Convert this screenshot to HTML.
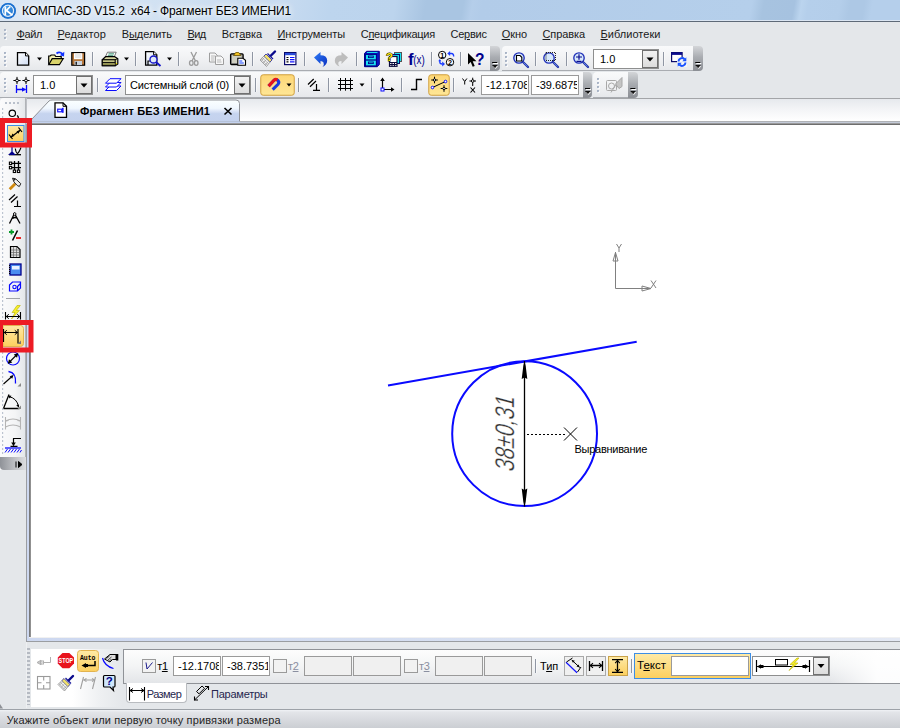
<!DOCTYPE html>
<html lang="ru"><head><meta charset="utf-8"><title>КОМПАС-3D V15.2 x64 - Фрагмент БЕЗ ИМЕНИ1</title>
<style>
html,body{margin:0;padding:0}
body{width:900px;height:728px;position:relative;overflow:hidden;background:#e4e7ea;font-family:'Liberation Sans', sans-serif;font-size:11px}
u{text-decoration:underline;text-underline-offset:1px}
svg{position:absolute;left:0;top:0;overflow:visible}
</style></head><body>
<div style="position:absolute;left:0px;top:0px;width:900px;height:20px;background:linear-gradient(100deg,#d9e6f4 0px,#dae7f5 29px,#d2e2f2 148px,#c6daf0 286px,#bdd5ee 326px,#bcd4ed 390px,#a9c5e2 420px,#a9c5e2 457px,#b5ceea 466px,#b2cce9 476px,#b5cfeb 741px,#a7c3e0 753px,#a6c2e0 783px,#bbd4ee 790px,#b5cfeb 797px,#b4ceea 828px,#adc8e5 838px,#adc8e5 852px,#b5cfeb 860px,#b5cfeb 890px)"></div>
<div style="position:absolute;left:0px;top:20px;width:900px;height:1px;background:#dbe6f3"></div>
<div style="position:absolute;left:0px;top:21px;width:900px;height:1px;background:#5e6a78"></div>
<div style="position:absolute;left:0px;top:46px;width:489.5px;height:25px;background:linear-gradient(#f9fafb,#f1f2f4 50%,#e6e8eb);border-radius:4px 0 0 0;border-bottom:1px solid #a9acb1;box-sizing:border-box"></div>
<div style="position:absolute;left:489.5px;top:46px;width:10.2px;height:25px;background:linear-gradient(#d3d5d8,#a9acb1 45%,#8b8e94);border-radius:0 4px 4px 0"></div>
<div style="position:absolute;left:502px;top:46px;width:190.5px;height:25px;background:linear-gradient(#f9fafb,#f1f2f4 50%,#e6e8eb);border-radius:4px 0 0 0;border-bottom:1px solid #a9acb1;box-sizing:border-box"></div>
<div style="position:absolute;left:692.5px;top:46px;width:10.5px;height:25px;background:linear-gradient(#d3d5d8,#a9acb1 45%,#8b8e94);border-radius:0 4px 4px 0"></div>
<div style="position:absolute;left:0px;top:72px;width:583px;height:26px;background:linear-gradient(#f9fafb,#f1f2f4 50%,#e6e8eb);border-radius:4px 0 0 0;border-bottom:1px solid #a9acb1;box-sizing:border-box"></div>
<div style="position:absolute;left:583px;top:72px;width:9px;height:26px;background:linear-gradient(#d3d5d8,#a9acb1 45%,#8b8e94);border-radius:0 4px 4px 0"></div>
<div style="position:absolute;left:593px;top:72px;width:35px;height:26px;background:linear-gradient(#f9fafb,#f1f2f4 50%,#e6e8eb);border-radius:4px 0 0 0;border-bottom:1px solid #a9acb1;box-sizing:border-box"></div>
<div style="position:absolute;left:628px;top:72px;width:9.6px;height:26px;background:linear-gradient(#d3d5d8,#a9acb1 45%,#8b8e94);border-radius:0 4px 4px 0"></div>
<div style="position:absolute;left:33px;top:75px;width:60px;height:20px;background:#fff;border:1px solid #8e8f8f;box-sizing:border-box"></div>
<div style="position:absolute;left:76px;top:76px;width:16px;height:18px;background:linear-gradient(#f2f2f2,#dcdcdc);border:1px solid #707070;box-sizing:border-box"></div>
<div style="position:absolute;left:125px;top:75px;width:126px;height:20px;background:#fff;border:1px solid #8e8f8f;box-sizing:border-box"></div>
<div style="position:absolute;left:234px;top:76px;width:16px;height:18px;background:linear-gradient(#f2f2f2,#dcdcdc);border:1px solid #707070;box-sizing:border-box"></div>
<div style="position:absolute;left:593px;top:49px;width:66px;height:20px;background:#fff;border:1px solid #8e8f8f;box-sizing:border-box"></div>
<div style="position:absolute;left:642px;top:50px;width:16px;height:18px;background:linear-gradient(#f2f2f2,#dcdcdc);border:1px solid #707070;box-sizing:border-box"></div>
<div style="position:absolute;left:481px;top:75px;width:48px;height:20px;background:#fff;border:1px solid #9a9a9a;box-sizing:border-box"></div>
<div style="position:absolute;left:531px;top:75px;width:48px;height:20px;background:#fff;border:1px solid #9a9a9a;box-sizing:border-box"></div>
<div style="position:absolute;left:0px;top:98px;width:25px;height:372px;background:linear-gradient(90deg,#fbfbfc,#f4f5f6 60%,#e4e7ea);border-radius:4px 0 0 0"></div>
<div style="position:absolute;left:25px;top:98px;width:2px;height:372px;background:linear-gradient(90deg,#a9acb0,#c4c7cc)"></div>
<div style="position:absolute;left:26px;top:470px;width:1px;height:238px;background:#eef0f2"></div>
<div style="position:absolute;left:0px;top:457px;width:26px;height:13px;background:linear-gradient(90deg,#8f9298,#b9bbbf 50%,#dcdde0);border-radius:0 0 0 4px"></div>
<div style="position:absolute;left:27px;top:98px;width:873px;height:1px;background:#a3a5a8"></div>
<div style="position:absolute;left:27px;top:99px;width:873px;height:22px;background:linear-gradient(#e6e9ed,#f4f5f7 50%,#ffffff)"></div>
<div style="position:absolute;left:27px;top:121px;width:873px;height:1px;background:#b0b2b6"></div>
<div style="position:absolute;left:27px;top:122px;width:873px;height:1px;background:#c3cad8"></div>
<div style="position:absolute;left:27px;top:123px;width:873px;height:1px;background:#9a9a9a"></div>
<div style="position:absolute;left:27px;top:124px;width:873px;height:1px;background:#6e6e6e"></div>
<div style="position:absolute;left:26px;top:124px;width:1px;height:518px;background:#9a9da1"></div>
<div style="position:absolute;left:27px;top:124px;width:2px;height:517px;background:#cdd8f0"></div>
<div style="position:absolute;left:29px;top:125px;width:2px;height:512px;background:linear-gradient(90deg,#6e6e6e,#9c9c9c)"></div>
<div style="position:absolute;left:31px;top:125px;width:869px;height:512px;background:#fff"></div>
<div style="position:absolute;left:29px;top:637px;width:871px;height:1px;background:#f1f1f1"></div>
<div style="position:absolute;left:27px;top:638px;width:873px;height:3px;background:linear-gradient(90deg,#cdd8f0 0,#d5def1 40%,#e4e9f4 100%)"></div>
<div style="position:absolute;left:26px;top:641px;width:874px;height:1px;background:#9a9da1"></div>
<div style="position:absolute;left:27px;top:646px;width:4px;height:59px;background:repeating-linear-gradient(#e4e7ea 0 2px,#b5bac2 2px 4px);width:3px"></div>
<div style="position:absolute;left:31px;top:649px;width:92px;height:58px;background:linear-gradient(90deg,#ffffff 0%,#ffffff 45%,#eef0f2 75%,#e4e7ea 100%)"></div>
<div style="position:absolute;left:123px;top:649px;width:777px;height:35px;background:linear-gradient(90deg,rgba(255,255,255,0) 0,rgba(255,255,255,0) 91%,rgba(255,255,255,.9) 97%),linear-gradient(#fdfdfd,#f3f4f5 50%,#e3e5e8);border:1px solid #8f9297;border-right:none;box-sizing:border-box"></div>
<div style="position:absolute;left:126px;top:683px;width:61px;height:20px;background:#fff;border:1px solid #b9bcc0;border-top:none;border-radius:0 0 4px 4px;box-sizing:border-box"></div>
<div style="position:absolute;left:127px;top:683px;width:59px;height:1px;background:#fff"></div>
<div style="position:absolute;left:142px;top:659px;width:14px;height:14px;background:#f2f2f2;border:1px solid #9a9a9a;box-sizing:border-box"></div>
<div style="position:absolute;left:273px;top:659px;width:14px;height:14px;background:#f2f2f2;border:1px solid #9a9a9a;box-sizing:border-box"></div>
<div style="position:absolute;left:404px;top:659px;width:14px;height:14px;background:#f2f2f2;border:1px solid #9a9a9a;box-sizing:border-box"></div>
<div style="position:absolute;left:173px;top:656px;width:48px;height:20px;background:#fff;border:1px solid #9a9a9a;box-sizing:border-box"></div>
<div style="position:absolute;left:222px;top:656px;width:48px;height:20px;background:#fff;border:1px solid #9a9a9a;box-sizing:border-box"></div>
<div style="position:absolute;left:304px;top:656px;width:48px;height:20px;background:#f0f0f0;border:1px solid #9a9a9a;box-sizing:border-box"></div>
<div style="position:absolute;left:353px;top:656px;width:48px;height:20px;background:#f0f0f0;border:1px solid #9a9a9a;box-sizing:border-box"></div>
<div style="position:absolute;left:435px;top:656px;width:48px;height:20px;background:#f0f0f0;border:1px solid #9a9a9a;box-sizing:border-box"></div>
<div style="position:absolute;left:484px;top:656px;width:48px;height:20px;background:#f0f0f0;border:1px solid #9a9a9a;box-sizing:border-box"></div>
<div style="position:absolute;left:564px;top:656px;width:20px;height:20px;background:#f0f0f0;border:1px solid #a9a9a9;box-sizing:border-box"></div>
<div style="position:absolute;left:586px;top:656px;width:20px;height:20px;background:#f0f0f0;border:1px solid #a9a9a9;box-sizing:border-box"></div>
<div style="position:absolute;left:634px;top:653px;width:117px;height:26px;background:linear-gradient(#feeaa6,#fccf5e);border:1px solid #3c8ee6;box-sizing:border-box"></div>
<div style="position:absolute;left:671px;top:656px;width:78px;height:20px;background:#fff;border:1px solid #9a9a9a;box-sizing:border-box"></div>
<div style="position:absolute;left:752px;top:656px;width:78px;height:20px;background:#fff;border:1px solid #8e8f8f;box-sizing:border-box"></div>
<div style="position:absolute;left:813px;top:657px;width:16px;height:18px;background:linear-gradient(#f2f2f2,#dcdcdc);border:1px solid #707070;box-sizing:border-box"></div>
<div style="position:absolute;left:0px;top:709px;width:900px;height:1px;background:#9da2a8"></div>
<div style="position:absolute;left:0px;top:710px;width:900px;height:18px;background:linear-gradient(#f0f2f5 0,#e3e5e9 12%,#cbced3 100%)"></div>
<svg width="900" height="728" viewBox="0 0 900 728">
<defs>
<linearGradient id="gy" x1="0" y1="0" x2="0" y2="1"><stop offset="0" stop-color="#feeaa6"/><stop offset="1" stop-color="#fccf5e"/></linearGradient>
<linearGradient id="gyt" x1="0" y1="0" x2="0" y2="1"><stop offset="0" stop-color="#fdd674"/><stop offset=".5" stop-color="#fedf88"/><stop offset="1" stop-color="#fee695"/></linearGradient>
<linearGradient id="gh" x1="0" y1="0" x2="0" y2="1"><stop offset="0" stop-color="#d5d7da"/><stop offset="0.5" stop-color="#a2a5aa"/><stop offset="1" stop-color="#8d9096"/></linearGradient>
</defs>
<rect x="4" y="29" width="2" height="2" fill="#a9b4c6"/><rect x="5" y="30" width="2" height="2" fill="#fff" opacity=".7"/><rect x="4" y="29" width="2" height="2" fill="#a9b4c6" opacity=".8"/>
<rect x="4" y="33" width="2" height="2" fill="#a9b4c6"/><rect x="5" y="34" width="2" height="2" fill="#fff" opacity=".7"/><rect x="4" y="33" width="2" height="2" fill="#a9b4c6" opacity=".8"/>
<rect x="4" y="37" width="2" height="2" fill="#a9b4c6"/><rect x="5" y="38" width="2" height="2" fill="#fff" opacity=".7"/><rect x="4" y="37" width="2" height="2" fill="#a9b4c6" opacity=".8"/>
<rect x="492.1" y="62" width="5" height="1" fill="#000"/><rect x="493.1" y="63" width="5" height="1" fill="#fff"/><path d="M492.1 65h5l-2.5 3z" fill="#000"/><path d="M493.1 66h5l-2.5 3z" fill="#fff" opacity=".9"/><path d="M492.6 65h5l-2.5 3z" fill="#111"/>
<rect x="695.25" y="62" width="5" height="1" fill="#000"/><rect x="696.25" y="63" width="5" height="1" fill="#fff"/><path d="M695.25 65h5l-2.5 3z" fill="#000"/><path d="M696.25 66h5l-2.5 3z" fill="#fff" opacity=".9"/><path d="M695.75 65h5l-2.5 3z" fill="#111"/>
<rect x="585.0" y="88" width="5" height="1" fill="#000"/><rect x="586.0" y="89" width="5" height="1" fill="#fff"/><path d="M585.0 91h5l-2.5 3z" fill="#000"/><path d="M586.0 92h5l-2.5 3z" fill="#fff" opacity=".9"/><path d="M585.5 91h5l-2.5 3z" fill="#111"/>
<rect x="630.3" y="88" width="5" height="1" fill="#000"/><rect x="631.3" y="89" width="5" height="1" fill="#fff"/><path d="M630.3 91h5l-2.5 3z" fill="#000"/><path d="M631.3 92h5l-2.5 3z" fill="#fff" opacity=".9"/><path d="M630.8 91h5l-2.5 3z" fill="#111"/>
<rect x="4" y="52" width="2" height="2" fill="#a9b4c6"/><rect x="5" y="53" width="2" height="2" fill="#fff" opacity=".7"/><rect x="4" y="52" width="2" height="2" fill="#a9b4c6" opacity=".8"/>
<rect x="4" y="56" width="2" height="2" fill="#a9b4c6"/><rect x="5" y="57" width="2" height="2" fill="#fff" opacity=".7"/><rect x="4" y="56" width="2" height="2" fill="#a9b4c6" opacity=".8"/>
<rect x="4" y="60" width="2" height="2" fill="#a9b4c6"/><rect x="5" y="61" width="2" height="2" fill="#fff" opacity=".7"/><rect x="4" y="60" width="2" height="2" fill="#a9b4c6" opacity=".8"/>
<rect x="4" y="64" width="2" height="2" fill="#a9b4c6"/><rect x="5" y="65" width="2" height="2" fill="#fff" opacity=".7"/><rect x="4" y="64" width="2" height="2" fill="#a9b4c6" opacity=".8"/>
<rect x="505" y="52" width="2" height="2" fill="#a9b4c6"/><rect x="506" y="53" width="2" height="2" fill="#fff" opacity=".7"/><rect x="505" y="52" width="2" height="2" fill="#a9b4c6" opacity=".8"/>
<rect x="505" y="56" width="2" height="2" fill="#a9b4c6"/><rect x="506" y="57" width="2" height="2" fill="#fff" opacity=".7"/><rect x="505" y="56" width="2" height="2" fill="#a9b4c6" opacity=".8"/>
<rect x="505" y="60" width="2" height="2" fill="#a9b4c6"/><rect x="506" y="61" width="2" height="2" fill="#fff" opacity=".7"/><rect x="505" y="60" width="2" height="2" fill="#a9b4c6" opacity=".8"/>
<rect x="505" y="64" width="2" height="2" fill="#a9b4c6"/><rect x="506" y="65" width="2" height="2" fill="#fff" opacity=".7"/><rect x="505" y="64" width="2" height="2" fill="#a9b4c6" opacity=".8"/>
<rect x="4" y="78" width="2" height="2" fill="#a9b4c6"/><rect x="5" y="79" width="2" height="2" fill="#fff" opacity=".7"/><rect x="4" y="78" width="2" height="2" fill="#a9b4c6" opacity=".8"/>
<rect x="4" y="82" width="2" height="2" fill="#a9b4c6"/><rect x="5" y="83" width="2" height="2" fill="#fff" opacity=".7"/><rect x="4" y="82" width="2" height="2" fill="#a9b4c6" opacity=".8"/>
<rect x="4" y="86" width="2" height="2" fill="#a9b4c6"/><rect x="5" y="87" width="2" height="2" fill="#fff" opacity=".7"/><rect x="4" y="86" width="2" height="2" fill="#a9b4c6" opacity=".8"/>
<rect x="4" y="90" width="2" height="2" fill="#a9b4c6"/><rect x="5" y="91" width="2" height="2" fill="#fff" opacity=".7"/><rect x="4" y="90" width="2" height="2" fill="#a9b4c6" opacity=".8"/>
<rect x="597" y="78" width="2" height="2" fill="#a9b4c6"/><rect x="598" y="79" width="2" height="2" fill="#fff" opacity=".7"/><rect x="597" y="78" width="2" height="2" fill="#a9b4c6" opacity=".8"/>
<rect x="597" y="82" width="2" height="2" fill="#a9b4c6"/><rect x="598" y="83" width="2" height="2" fill="#fff" opacity=".7"/><rect x="597" y="82" width="2" height="2" fill="#a9b4c6" opacity=".8"/>
<rect x="597" y="86" width="2" height="2" fill="#a9b4c6"/><rect x="598" y="87" width="2" height="2" fill="#fff" opacity=".7"/><rect x="597" y="86" width="2" height="2" fill="#a9b4c6" opacity=".8"/>
<rect x="597" y="90" width="2" height="2" fill="#a9b4c6"/><rect x="598" y="91" width="2" height="2" fill="#fff" opacity=".7"/><rect x="597" y="90" width="2" height="2" fill="#a9b4c6" opacity=".8"/>
<rect x="92" y="52" width="1" height="14" fill="#8f96a3"/><rect x="93" y="52" width="1" height="14" fill="#fff" opacity=".5"/>
<rect x="135" y="52" width="1" height="14" fill="#8f96a3"/><rect x="136" y="52" width="1" height="14" fill="#fff" opacity=".5"/>
<rect x="178" y="52" width="1" height="14" fill="#8f96a3"/><rect x="179" y="52" width="1" height="14" fill="#fff" opacity=".5"/>
<rect x="252" y="52" width="1" height="14" fill="#8f96a3"/><rect x="253" y="52" width="1" height="14" fill="#fff" opacity=".5"/>
<rect x="304" y="52" width="1" height="14" fill="#8f96a3"/><rect x="305" y="52" width="1" height="14" fill="#fff" opacity=".5"/>
<rect x="356" y="52" width="1" height="14" fill="#8f96a3"/><rect x="357" y="52" width="1" height="14" fill="#fff" opacity=".5"/>
<rect x="431" y="52" width="1" height="14" fill="#8f96a3"/><rect x="432" y="52" width="1" height="14" fill="#fff" opacity=".5"/>
<rect x="460" y="52" width="1" height="14" fill="#8f96a3"/><rect x="461" y="52" width="1" height="14" fill="#fff" opacity=".5"/>
<rect x="535" y="52" width="1" height="14" fill="#8f96a3"/><rect x="536" y="52" width="1" height="14" fill="#fff" opacity=".5"/>
<rect x="566" y="52" width="1" height="14" fill="#8f96a3"/><rect x="567" y="52" width="1" height="14" fill="#fff" opacity=".5"/>
<rect x="663" y="52" width="1" height="14" fill="#8f96a3"/><rect x="664" y="52" width="1" height="14" fill="#fff" opacity=".5"/>
<rect x="97" y="78" width="1" height="14" fill="#8f96a3"/><rect x="98" y="78" width="1" height="14" fill="#fff" opacity=".5"/>
<rect x="255" y="78" width="1" height="14" fill="#8f96a3"/><rect x="256" y="78" width="1" height="14" fill="#fff" opacity=".5"/>
<rect x="298" y="78" width="1" height="14" fill="#8f96a3"/><rect x="299" y="78" width="1" height="14" fill="#fff" opacity=".5"/>
<rect x="328" y="78" width="1" height="14" fill="#8f96a3"/><rect x="329" y="78" width="1" height="14" fill="#fff" opacity=".5"/>
<rect x="371" y="78" width="1" height="14" fill="#8f96a3"/><rect x="372" y="78" width="1" height="14" fill="#fff" opacity=".5"/>
<rect x="401" y="78" width="1" height="14" fill="#8f96a3"/><rect x="402" y="78" width="1" height="14" fill="#fff" opacity=".5"/>
<rect x="453" y="78" width="1" height="14" fill="#8f96a3"/><rect x="454" y="78" width="1" height="14" fill="#fff" opacity=".5"/>
<path d="M80.5 83.5h7l-3.5 4z" fill="#000"/>
<path d="M238.5 83.5h7l-3.5 4z" fill="#000"/>
<path d="M646.5 57.5h7l-3.5 4z" fill="#000"/>
<rect x="260.75" y="74.75" width="33.5" height="20.5" rx="2.5" fill="url(#gyt)" stroke="#d0a040"/>
<rect x="428.75" y="74.75" width="20.5" height="20.5" rx="2.5" fill="url(#gyt)" stroke="#d0a040"/>
<path d="M37 57.5h5l-2.5 3.0z" fill="#000"/>
<path d="M124 57.5h5l-2.5 3.0z" fill="#000"/>
<path d="M167 57.5h5l-2.5 3.0z" fill="#000"/>
<path d="M286.5 83.5h5l-2.5 3.0z" fill="#000"/>
<path d="M359.5 83.5h5l-2.5 3.0z" fill="#000"/>
<path d="M16 461.5v6M18.5 461.5l3.5 3l-3.5 3z" stroke="#000" fill="#000" stroke-width="1"/>
<rect x="5" y="102" width="2" height="2" fill="#b9c0cb"/>
<rect x="9" y="102" width="2" height="2" fill="#b9c0cb"/>
<rect x="13" y="102" width="2" height="2" fill="#b9c0cb"/>
<rect x="17" y="102" width="2" height="2" fill="#b9c0cb"/>
<rect x="2" y="108" width="1.200" height="2" fill="#bcc4d0"/>
<rect x="2" y="112" width="1.200" height="2" fill="#bcc4d0"/>
<rect x="2" y="116" width="1.200" height="2" fill="#bcc4d0"/>
<rect x="2" y="120" width="1.200" height="2" fill="#bcc4d0"/>
<rect x="2" y="124" width="1.200" height="2" fill="#bcc4d0"/>
<rect x="2" y="128" width="1.200" height="2" fill="#bcc4d0"/>
<rect x="2" y="132" width="1.200" height="2" fill="#bcc4d0"/>
<rect x="2" y="136" width="1.200" height="2" fill="#bcc4d0"/>
<rect x="2" y="140" width="1.200" height="2" fill="#bcc4d0"/>
<rect x="2" y="144" width="1.200" height="2" fill="#bcc4d0"/>
<rect x="2" y="148" width="1.200" height="2" fill="#bcc4d0"/>
<rect x="2" y="152" width="1.200" height="2" fill="#bcc4d0"/>
<rect x="2" y="156" width="1.200" height="2" fill="#bcc4d0"/>
<rect x="2" y="160" width="1.200" height="2" fill="#bcc4d0"/>
<rect x="2" y="164" width="1.200" height="2" fill="#bcc4d0"/>
<rect x="2" y="168" width="1.200" height="2" fill="#bcc4d0"/>
<rect x="2" y="172" width="1.200" height="2" fill="#bcc4d0"/>
<rect x="2" y="176" width="1.200" height="2" fill="#bcc4d0"/>
<rect x="2" y="180" width="1.200" height="2" fill="#bcc4d0"/>
<rect x="2" y="184" width="1.200" height="2" fill="#bcc4d0"/>
<rect x="2" y="188" width="1.200" height="2" fill="#bcc4d0"/>
<rect x="2" y="192" width="1.200" height="2" fill="#bcc4d0"/>
<rect x="2" y="196" width="1.200" height="2" fill="#bcc4d0"/>
<rect x="2" y="200" width="1.200" height="2" fill="#bcc4d0"/>
<rect x="2" y="204" width="1.200" height="2" fill="#bcc4d0"/>
<rect x="2" y="208" width="1.200" height="2" fill="#bcc4d0"/>
<rect x="2" y="212" width="1.200" height="2" fill="#bcc4d0"/>
<rect x="2" y="216" width="1.200" height="2" fill="#bcc4d0"/>
<rect x="2" y="220" width="1.200" height="2" fill="#bcc4d0"/>
<rect x="2" y="224" width="1.200" height="2" fill="#bcc4d0"/>
<rect x="2" y="228" width="1.200" height="2" fill="#bcc4d0"/>
<rect x="2" y="232" width="1.200" height="2" fill="#bcc4d0"/>
<rect x="2" y="236" width="1.200" height="2" fill="#bcc4d0"/>
<rect x="2" y="240" width="1.200" height="2" fill="#bcc4d0"/>
<rect x="2" y="244" width="1.200" height="2" fill="#bcc4d0"/>
<rect x="2" y="248" width="1.200" height="2" fill="#bcc4d0"/>
<rect x="2" y="252" width="1.200" height="2" fill="#bcc4d0"/>
<rect x="2" y="256" width="1.200" height="2" fill="#bcc4d0"/>
<rect x="2" y="260" width="1.200" height="2" fill="#bcc4d0"/>
<rect x="2" y="264" width="1.200" height="2" fill="#bcc4d0"/>
<rect x="2" y="268" width="1.200" height="2" fill="#bcc4d0"/>
<rect x="2" y="272" width="1.200" height="2" fill="#bcc4d0"/>
<rect x="2" y="276" width="1.200" height="2" fill="#bcc4d0"/>
<rect x="2" y="280" width="1.200" height="2" fill="#bcc4d0"/>
<rect x="2" y="284" width="1.200" height="2" fill="#bcc4d0"/>
<rect x="2" y="288" width="1.200" height="2" fill="#bcc4d0"/>
<rect x="2" y="292" width="1.200" height="2" fill="#bcc4d0"/>
<rect x="2" y="296" width="1.200" height="2" fill="#bcc4d0"/>
<rect x="2" y="300" width="1.200" height="2" fill="#bcc4d0"/>
<rect x="2" y="304" width="1.200" height="2" fill="#bcc4d0"/>
<rect x="2" y="308" width="1.200" height="2" fill="#bcc4d0"/>
<rect x="2" y="312" width="1.200" height="2" fill="#bcc4d0"/>
<rect x="2" y="316" width="1.200" height="2" fill="#bcc4d0"/>
<rect x="2" y="320" width="1.200" height="2" fill="#bcc4d0"/>
<rect x="2" y="324" width="1.200" height="2" fill="#bcc4d0"/>
<rect x="2" y="328" width="1.200" height="2" fill="#bcc4d0"/>
<rect x="2" y="332" width="1.200" height="2" fill="#bcc4d0"/>
<rect x="2" y="336" width="1.200" height="2" fill="#bcc4d0"/>
<rect x="2" y="340" width="1.200" height="2" fill="#bcc4d0"/>
<rect x="2" y="344" width="1.200" height="2" fill="#bcc4d0"/>
<rect x="2" y="348" width="1.200" height="2" fill="#bcc4d0"/>
<rect x="2" y="352" width="1.200" height="2" fill="#bcc4d0"/>
<rect x="2" y="356" width="1.200" height="2" fill="#bcc4d0"/>
<rect x="2" y="360" width="1.200" height="2" fill="#bcc4d0"/>
<rect x="2" y="364" width="1.200" height="2" fill="#bcc4d0"/>
<rect x="2" y="368" width="1.200" height="2" fill="#bcc4d0"/>
<rect x="2" y="372" width="1.200" height="2" fill="#bcc4d0"/>
<rect x="2" y="376" width="1.200" height="2" fill="#bcc4d0"/>
<rect x="2" y="380" width="1.200" height="2" fill="#bcc4d0"/>
<rect x="2" y="384" width="1.200" height="2" fill="#bcc4d0"/>
<rect x="2" y="388" width="1.200" height="2" fill="#bcc4d0"/>
<rect x="2" y="392" width="1.200" height="2" fill="#bcc4d0"/>
<rect x="2" y="396" width="1.200" height="2" fill="#bcc4d0"/>
<rect x="2" y="400" width="1.200" height="2" fill="#bcc4d0"/>
<rect x="2" y="404" width="1.200" height="2" fill="#bcc4d0"/>
<rect x="2" y="408" width="1.200" height="2" fill="#bcc4d0"/>
<rect x="2" y="412" width="1.200" height="2" fill="#bcc4d0"/>
<rect x="2" y="416" width="1.200" height="2" fill="#bcc4d0"/>
<rect x="2" y="420" width="1.200" height="2" fill="#bcc4d0"/>
<rect x="2" y="424" width="1.200" height="2" fill="#bcc4d0"/>
<rect x="2" y="428" width="1.200" height="2" fill="#bcc4d0"/>
<rect x="2" y="432" width="1.200" height="2" fill="#bcc4d0"/>
<rect x="2" y="436" width="1.200" height="2" fill="#bcc4d0"/>
<rect x="2" y="440" width="1.200" height="2" fill="#bcc4d0"/>
<rect x="2" y="444" width="1.200" height="2" fill="#bcc4d0"/>
<rect x="2" y="448" width="1.200" height="2" fill="#bcc4d0"/>
<rect x="2" y="452" width="1.200" height="2" fill="#bcc4d0"/>
<rect x="6" y="298" width="14" height="1" fill="#a0a3a8"/>
<defs><linearGradient id="gt" x1="0" y1="0" x2="0" y2="1"><stop offset="0" stop-color="#fbffff"/><stop offset=".38" stop-color="#f0f7fe"/><stop offset=".52" stop-color="#d8e2f6"/><stop offset=".62" stop-color="#c6d4ef"/><stop offset="1" stop-color="#c4d2ee"/></linearGradient></defs>
<path d="M30 122 L32 119 L49 101 Q50 100 52 100 L236 100 Q239.5 100 239.5 103.5 L239.5 122 Z" fill="url(#gt)" stroke="#8f9297" stroke-width="1"/>
<rect x="30" y="121.5" width="210" height="1.5" fill="#c3d1ee"/>
<path d="M224.5 108l7 6.5M231.5 108l-7 6.5" stroke="#000" stroke-width="1.6" fill="none"/>
<path d="M55 102.800h8l3.500 3.500v11h-11.500z" fill="#fff" stroke="#000" stroke-width="1.300"/><path d="M63 102.800v3.500h3.500" fill="none" stroke="#000"/><rect x="57.700" y="109.200" width="4" height="2.600" fill="#fff" stroke="#1a1aff" stroke-width="1.200"/><path d="M62.800 107.800v5" stroke="#1a1aff" stroke-width="1.700"/>
<g fill="none">
<path d="M388 385.400L636.700 341.800" stroke="#0a0aff" stroke-width="2"/>
<circle cx="524.600" cy="433.700" r="72.400" stroke="#0a0aff" stroke-width="2"/>
<path d="M524.500 361v145.500" stroke="#000" stroke-width="1.300"/>
<path d="M524.500 361l-1.200 5l-1.600 13l2.800 -1.500l2.800 1.500l-1.600 -13z" fill="#000"/>
<path d="M524.500 506.400l-1.200 -5l-1.600 -13l2.800 1.500l2.800 -1.500l-1.600 13z" fill="#000"/>
<path d="M527 434.500h38" stroke="#000" stroke-width="1" stroke-dasharray="2 2"/>
<path d="M564 427.500l13 13M577 427.500l-13 13" stroke="#000" stroke-width="1"/>
<g stroke="#808080" stroke-width="1">
<path d="M615.500 252v36.500h35.500"/><path d="M615.500 252.500l-2.500 8.500h5z"/><path d="M651 288.500l-9 -2.500v5z"/>
<path d="M616.500 244l2.500 4l2.500 -4M619 248v4"/><path d="M651 280.500l5 7.500M656 280.500l-5 7.500"/>
</g></g>
<text transform="translate(513.500 472.500) rotate(-90) skewX(-15)" font-family="Liberation Sans, sans-serif" font-size="27" fill="#333" stroke="#fff" stroke-width="0.350" textLength="75" lengthAdjust="spacingAndGlyphs">38±0,31</text>
<path d="M146 662.5l1 6.500l5.500 -6.500" stroke="#1a1a8c" stroke-width="1" fill="none"/>
<rect x="535" y="659" width="1" height="14" fill="#8f96a3"/><rect x="536" y="659" width="1" height="14" fill="#fff" opacity=".5"/>
<rect x="608.5" y="656.500" width="19" height="19" fill="url(#gy)" stroke="#c9a24a"/>
<rect x="631" y="659" width="1" height="14" fill="#8f96a3"/><rect x="632" y="659" width="1" height="14" fill="#fff" opacity=".5"/>
<path d="M817.500 664h7l-3.500 4z" fill="#000"/>
<path d="M0 704l3 4.500h-3z" fill="#8e9196"/>
<defs><linearGradient id="gpg" x1="0" y1="0" x2="1" y2="1"><stop offset="0" stop-color="#fff"/><stop offset="1" stop-color="#cfdcf3"/></linearGradient></defs>
<path d="M17.500 52.700h8l3.200 3.200v9.200h-11.200z" fill="url(#gpg)" stroke="#000" stroke-width="1.300"/><path d="M25.500 52.700v3.200h3.200" fill="#fff" stroke="#000" stroke-width="1"/>
<path d="M48.700 64.500v-8.500h1.500l1 -1h3.500l1 1.500h5.500v2" fill="#f4f0b0" stroke="#000" stroke-width="1.200"/><path d="M48.700 64.700l3.500 -6h11l-3.800 6z" fill="#d9d36a" stroke="#000" stroke-width="1.200"/><path d="M56.500 53.500q3 -2.500 6 0.500" fill="none" stroke="#1030ff" stroke-width="1.800"/><path d="M64.300 51.800l-0.300 4.700l-4.200 -1.200z" fill="#1030ff"/>
<rect x="71.800" y="52.600" width="12.800" height="12.600" fill="#b5763a" stroke="#000" stroke-width="1.200"/><rect x="74" y="53.200" width="8.300" height="6" fill="#fff"/><path d="M75 55h6.300M75 57h6.300" stroke="#c8c8c8" stroke-width=".8"/><rect x="74.500" y="61" width="7.500" height="4" fill="#c9d2dd"/><rect x="75.500" y="61.800" width="1.500" height="3" fill="#222"/>
<path d="M105.300 57l2.200 -4.800h8.700l-2 4.800z" fill="#fff" stroke="#666" stroke-width=".9"/><path d="M108.500 53.800h5.500M107.800 55.300h5.500" stroke="#2a8a6a" stroke-width=".9"/><path d="M102.300 59.700l3.200 -3h9.300l3 2v5.300l-2.600 1.700h-12.900z" fill="#d6d6a0" stroke="#000" stroke-width="1.200" stroke-linejoin="round"/><rect x="102.300" y="59.700" width="12.900" height="6" fill="#c2c284" stroke="#000" stroke-width="1.100"/><path d="M102.300 62.600h12.900" stroke="#000" stroke-width="1"/><rect x="103" y="63.300" width="11.500" height="1.700" fill="#8c8c4c"/><path d="M115.200 59.700l2.600 -1.200" stroke="#000" stroke-width="1"/><rect x="115.900" y="63" width="1.200" height="1.200" fill="#e8d800"/>
<path d="M145.600 51.600h8l3.200 3.200v10.400h-11.200z" fill="url(#gpg)" stroke="#000" stroke-width="1.300"/><path d="M153.600 51.600v3.200h3.200" fill="#fff" stroke="#000"/><path d="M148 65v-4h3" fill="none" stroke="#000" stroke-width="1.200"/><circle cx="153.500" cy="59.500" r="3.500" fill="#dfe9f7" stroke="#1414c8" stroke-width="1.300"/><path d="M156.200 62.200l4.300 3.800" stroke="#1414c8" stroke-width="1.900"/>
<g fill="none" stroke="#9b9b9b" stroke-width="1.300"><path d="M191 52l4.500 9M196.500 52l-4.500 9"/><ellipse cx="191.300" cy="63" rx="1.800" ry="2.300"/><ellipse cx="196.200" cy="63" rx="1.800" ry="2.300"/></g>
<g fill="#f7f7f7" stroke="#9e9e9e" stroke-width="1"><path d="M209.500 53h5.500l2.500 2.500v6.500h-8z"/><path d="M215.500 56h5.500l2.500 2.500v6h-8z"/></g><path d="M211 56h4M211 58h3.500M211 60h3.500M217 60h4M217 62h4.500" stroke="#b0b0b0" stroke-width=".9"/>
<rect x="230.600" y="53.800" width="12.500" height="10.700" rx="1" fill="#a5a5a5" stroke="#000" stroke-width="1.300"/><rect x="232" y="55.500" width="9.500" height="7.500" fill="#cfcfc0"/><path d="M233.500 55.500l2.200 -3h3l2.200 3z" fill="#f0c020" stroke="#6b5200" stroke-width=".8"/><path d="M237.800 58.300h5.200l2.500 2v5h-7.700z" fill="#fff" stroke="#000" stroke-width="1.100"/><path d="M239.300 61h3M239.300 63h4.500" stroke="#1040ff" stroke-width="1.200"/>
<g transform="translate(260 50.5)"><path d="M10.500 5.500l4.500 -4.500" stroke="#0a0a8c" stroke-width="2.400" stroke-linecap="round"/><path d="M6 3.500l6 6l-2.200 2.200l-6 -6z" fill="#f2e26a" stroke="#3b3b9c" stroke-width=".9"/><path d="M7.500 3l5.500 5.500" stroke="#1a1a9c" stroke-width="1.300"/><path d="M3.800 5.700l6 6l-3.300 4.300l-6.500 -6.500z" fill="#f4f4f4" stroke="#8e8e8e" stroke-width=".8"/><path d="M2.300 7.200l6 6M1 8.700l6 6M4.500 7l-3 3M6.500 9l-3.200 3.200M8.500 11l-3.200 3.300" stroke="#9a9a9a" stroke-width=".7"/></g>
<rect x="284.600" y="52.600" width="11.300" height="12" fill="#fff" stroke="#0a0a6c" stroke-width="1.200"/><rect x="285" y="53" width="10.500" height="2.200" fill="#2a4cd8"/><path d="M286.500 57.500h2M286.500 59.700h2M286.500 61.900h2" stroke="#000" stroke-width="1.200"/><path d="M290 57.500h4.500M290 59.700h4.500M290 61.900h4.500" stroke="#1414ff" stroke-width="1.200"/>
<defs><linearGradient id="gu" x1="0" y1="0" x2="1" y2="1"><stop offset="0" stop-color="#2f7df6"/><stop offset="1" stop-color="#0a2fc0"/></linearGradient></defs>
<path d="M314 57.500l6.500 -5.500v3.300q6.500 0 6.700 5.200q0 4 -4.700 6.500q2 -2.700 1 -4.500q-0.800 -1.500 -3 -1.500v3z" fill="url(#gu)"/>
<path d="M348 57.500l-6.500 -5.500v3.300q-6.500 0 -6.700 5.200q0 4 4.700 6q-2 -2.500 -1 -4.200q0.800 -1.300 3 -1.300v3z" fill="#bdbdbd"/>
<path d="M364.500 53.500l2 -2.200h12.800v13.200l-2 2.200h-12.800z" fill="#0a14c8" stroke="#00008b" stroke-width="1"/><rect x="365.300" y="54.300" width="11.200" height="11.700" fill="#19e0f0" stroke="#00008b" stroke-width="1.300"/><path d="M365.300 60h11.200" stroke="#00008b" stroke-width="1.300"/><path d="M367 52.500h10.500" stroke="#19e0f0" stroke-width="1"/><rect x="368.500" y="56" width="4.800" height="1.600" fill="none" stroke="#00008b" stroke-width=".9"/><rect x="368.500" y="62" width="4.800" height="1.600" fill="none" stroke="#00008b" stroke-width=".9"/>
<rect x="394.500" y="52.500" width="7" height="9" fill="#19e0f0" stroke="#555" stroke-width="1"/><rect x="392.500" y="54.500" width="7" height="9" fill="#19e0f0" stroke="#0a0a6c" stroke-width="1"/><rect x="389.500" y="56.500" width="7.500" height="9.800" fill="#fff" stroke="#0a0a3c" stroke-width="1.200"/><path d="M389.500 62.500h7.500M389.500 64.500h7.500M392 62.500v3.800M394.500 62.500v3.800" stroke="#0a0a3c" stroke-width="1"/>
<text x="386" y="60.500" font-family="Liberation Sans, sans-serif" font-weight="bold" font-size="11.500" fill="#f8e800" stroke="#000" stroke-width=".9" paint-order="stroke">?</text>
<text x="408" y="65" font-family="Liberation Sans, sans-serif" font-weight="bold" font-size="17" fill="#00008b">f</text><text x="413.300" y="64.300" font-family="Liberation Sans, sans-serif" font-size="12.500" fill="#00008b" textLength="11.500" lengthAdjust="spacingAndGlyphs">(x)</text>
<circle cx="442.200" cy="55" r="3.700" fill="#fff" stroke="#000" stroke-width="1"/><circle cx="450" cy="62.200" r="3.700" fill="#fff" stroke="#000" stroke-width="1"/><text x="440.300" y="57.600" font-family="Liberation Sans, sans-serif" font-weight="bold" font-size="7.200" fill="#000">1</text><text x="448" y="64.800" font-family="Liberation Sans, sans-serif" font-weight="bold" font-size="7.200" fill="#000">2</text><path d="M449 53.500h2.500q2.200 0 2.200 3" fill="none" stroke="#1a3cff" stroke-width="1.300"/><path d="M447.300 53.500l2.800 -2.600v5.200z" fill="#1a3cff"/><path d="M439.800 60.500v1.500q0 2 2.500 2" fill="none" stroke="#1a3cff" stroke-width="1.300"/><path d="M445 64l-2.800 -2.600v5.200z" fill="#1a3cff"/><path d="M438.300 61.300l1.500 -2.200l1.500 2.200z" fill="#1a3cff"/>
<path d="M468 53v11.500l2.700 -2.500l2 4.800l2 -0.900l-2 -4.600h3.800z" fill="#000"/><text x="475" y="65" font-family="Liberation Sans, sans-serif" font-weight="bold" font-size="17" fill="#00008b" textLength="9.500" lengthAdjust="spacingAndGlyphs">?</text>
<circle cx="519" cy="58" r="5.200" fill="#d6e8fb" stroke="#2030b8" stroke-width="1.350"/><path d="M523 62l5 5" stroke="#2434a8" stroke-width="2.300" stroke-linecap="round"/><path d="M523.5 62.5l4 4" stroke="#5a7ae0" stroke-width="1"/>
<path d="M516.500 55.500h3.500l1.800 1.800v3.700h-5.300z" fill="#fff" stroke="#000" stroke-width="1.100"/>
<circle cx="549" cy="58" r="5.200" fill="#d6e8fb" stroke="#2030b8" stroke-width="1.350"/><path d="M553 62l5 5" stroke="#2434a8" stroke-width="2.300" stroke-linecap="round"/><path d="M553.5 62.5l4 4" stroke="#5a7ae0" stroke-width="1"/>
<rect x="546" y="52.500" width="9.500" height="8" fill="none" stroke="#222" stroke-width="1" stroke-dasharray="1 1"/>
<circle cx="579" cy="58" r="5.200" fill="#d6e8fb" stroke="#2030b8" stroke-width="1.350"/><path d="M583 62l5 5" stroke="#2434a8" stroke-width="2.300" stroke-linecap="round"/><path d="M583.5 62.5l4 4" stroke="#5a7ae0" stroke-width="1"/>
<path d="M576 57h6M579 54.200v5.600M576.500 61.300h5" stroke="#0a0a8c" stroke-width="1.200" fill="none"/>
<rect x="671.600" y="52.600" width="10.500" height="9" fill="#fff" stroke="#0a0a6c" stroke-width="1.200"/><rect x="671.600" y="52.600" width="10.500" height="2.300" fill="#0a0a8c"/><rect x="677" y="57" width="10" height="10" fill="#f4f5f6"/><path d="M678.500 61.500a3.500 3.500 0 0 1 6 -2.300" fill="none" stroke="#1650ff" stroke-width="2"/><path d="M686.300 57.300v4h-4z" fill="#1650ff"/><path d="M685.500 62.500a3.500 3.500 0 0 1 -6 2.300" fill="none" stroke="#1650ff" stroke-width="2"/><path d="M677.700 66.700v-4h4z" fill="#1650ff"/>
<path d="M13.4 80.5h7.2M17 76.9v7.2" stroke="#000" stroke-width="1"/><circle cx="17" cy="80.5" r="1.4" fill="#fff" stroke="#000" stroke-width="1"/>
<path d="M22.4 80.5h7.2M26 76.9v7.2" stroke="#000" stroke-width="1"/><circle cx="26" cy="80.5" r="1.4" fill="#fff" stroke="#000" stroke-width="1"/>
<path d="M16.500 85v8M26.500 85v8M16.500 89.500h9" stroke="#0a0aff" stroke-width="1.300" fill="none"/><path d="M26 89.500l-4 -2.200v4.400z" fill="#0a0aff"/>
<g fill="#fff" stroke="#0a0aff" stroke-width="1"><path d="M105.500 90.500l4.500 -4.500h11l-4.500 4.500z"/><path d="M105.500 87l4.500 -4.500h11l-4.500 4.500z"/><path d="M105.500 83.200l4.500 -4.500h11l-4.500 4.500z"/></g>
<g fill="none" stroke-linecap="butt" transform="translate(274 84.300) scale(.9) translate(-274.500 -84.500)"><path d="M268.500 86.500l6 -6.500a3.200 3.200 0 0 1 4.500 4.500l-6 6" stroke="#1a3ce0" stroke-width="3.400"/><path d="M268.500 86.500l6 -6.500a3.200 3.200 0 0 1 3.800 -0.500" stroke="#e8141c" stroke-width="3.400"/></g>
<path d="M308 84.500l5.700 -5.500M310 86.700l6 -5.700M316.500 84v6M313 90.300h7" stroke="#000" stroke-width="1.200" fill="none"/>
<path d="M340.500 78v12.700M345.500 78v12.700M350.500 78v12.700M338 80.500h15M338 84.500h15M338 88.500h15" stroke="#000" stroke-width="1" fill="none"/>
<path d="M382.500 89.500v-10.500M382.500 89.500h10.500" stroke="#000" stroke-width="1.200"/><path d="M382.500 77.500l-2.300 3.500h4.600zM394.500 89.500l-3.500 -2.300v4.600z" fill="#000"/><rect x="381" y="88" width="3" height="3" fill="#fff" stroke="#0a0aff" stroke-width="1"/>
<path d="M411 89.500h5.500v-10h5.500" stroke="#000" stroke-width="1.400" fill="none"/>
<path d="M432.500 87.500l13 -6" stroke="#000" stroke-width="1"/>
<path d="M431.2 80h6.6M434.5 76.7v6.6" stroke="#000" stroke-width="1"/><circle cx="434.5" cy="80" r="1.2" fill="#fff" stroke="#000" stroke-width="1"/>
<path d="M440.7 88.5h6.6M444 85.2v6.6" stroke="#000" stroke-width="1"/><circle cx="444" cy="88.5" r="1.2" fill="#fff" stroke="#000" stroke-width="1"/>
<circle cx="432.500" cy="87.500" r="1.300" fill="#fff" stroke="#0a0aff"/><circle cx="445.500" cy="81.500" r="1.300" fill="#fff" stroke="#0a0aff"/>
<path d="M462.500 78.500l2.200 3l2.200 -3M464.700 81.500v3" stroke="#000" stroke-width="1" fill="none"/><path d="M470.500 87.500l4.500 5M475 87.500l-4.500 5" stroke="#000" stroke-width="1.100"/>
<path d="M469.4 81h6.6M472.7 77.7v6.6" stroke="#000" stroke-width="1"/><circle cx="472.7" cy="81" r="1.3" fill="#fff" stroke="#000" stroke-width="1"/>
<path d="M472.700 84v2" stroke="#000"/>
<g fill="none" stroke="#a8a8a8" stroke-width="1"><rect x="606.500" y="80.500" width="10" height="10" rx="1"/><circle cx="611.500" cy="86" r="3"/><path d="M611 92.500l5 -8M615.500 84l6.500 -6.500v9l-3 2z" fill="#c4c4c4"/></g>
<circle cx="12.300" cy="113.300" r="3.200" fill="none" stroke="#000" stroke-width="1.200"/><path d="M17 115.500q2 1 1 3.500" fill="none" stroke="#000" stroke-width="1.200"/>
<rect x="7.500" y="125.500" width="16.500" height="16" fill="url(#gy)" stroke="#3c8ee6" stroke-width="1"/><path d="M10.500 137.500l10 -7.500" stroke="#000" stroke-width="1.200"/><path d="M9 134.500l3.500 4.500M18.500 127.500l3.500 4.500" stroke="#000" stroke-width="1.200"/><path d="M11 137l3.500 -1l-2 -2.600zM20 130.200l-3.500 1l2 2.600z" fill="#000"/>
<path d="M9 154.700h12" stroke="#000" stroke-width="1.300"/><path d="M12 147v5l-2.500 2.500h5l-2.500 -2.500" fill="#00008b" stroke="#00008b" stroke-width="1.200"/><path d="M15.300 148.500q0.500 4 2.200 5q1.500 -1 3.500 -6" fill="none" stroke="#000" stroke-width="1.100"/>
<path d="M11.500 163.300h9.500M11.500 167.600h9.500M14.500 161v9M18.500 161v9" stroke="#000" stroke-width="1.300" fill="none"/><rect x="9.400" y="162.100" width="2.300" height="2.400" fill="#fff" stroke="#000" stroke-width="1.100"/><rect x="9.400" y="166.400" width="2.300" height="2.400" fill="#fff" stroke="#000" stroke-width="1.100"/><rect x="13.300" y="170.100" width="2.300" height="2.400" fill="#fff" stroke="#000" stroke-width="1.100"/><rect x="17.400" y="170.100" width="2.300" height="2.400" fill="#fff" stroke="#000" stroke-width="1.100"/>
<path d="M9.700 189.300l5.500 -5.500" stroke="#d08a10" stroke-width="2.800" stroke-linecap="butt"/><path d="M12.500 178.200l3 0.500l5.300 5l-1.500 2.800l-2 -1l-3.300 -3.500z" fill="#eee" stroke="#111" stroke-width=".9"/><path d="M12.500 178.200l2 2.500l1.500 -1.500z" fill="#222"/>
<path d="M9 200l6 -5.500M11 202.500l6.500 -6M17.500 200.500v6M14 206.500h7" stroke="#000" stroke-width="1.200" fill="none"/>
<path d="M9.500 223.500l5 -10l5.500 10M12.500 218.500q2.500 -2 5 0" stroke="#000" stroke-width="1.300" fill="none"/><circle cx="14.700" cy="214" r="1.300" fill="#fff" stroke="#000" stroke-width=".9"/>
<path d="M9 232h5M11.500 229.500v5" stroke="#0a9a2a" stroke-width="1.800"/><path d="M17.500 230.500l-5 10" stroke="#000" stroke-width="1.500"/><path d="M16 238h5" stroke="#e81010" stroke-width="1.800"/>
<path d="M10.500 246.500h6.500l3 3v8h-9.500z" fill="#ddd" stroke="#000" stroke-width="1.200"/><path d="M11 250h8.500M11 252.500h8.500M11 255h8.500M13.500 247v10M16.500 247v10" stroke="#666" stroke-width=".7"/>
<rect x="10" y="264" width="11" height="11" fill="#4a8cf0" stroke="#00008b" stroke-width="1.300"/><rect x="12" y="266" width="7.500" height="3.500" fill="#e8f0ff"/><path d="M9.500 265v10" stroke="#000" stroke-width="1" stroke-dasharray="1 1"/>
<path d="M9.500 285l3 -3h8v6l-3 3h-8zM12.500 282v0M17.500 291v-4.500l3 -3" fill="none" stroke="#0a0aff" stroke-width="1.200"/><circle cx="14.500" cy="287" r="1.700" fill="none" stroke="#0a0aff" stroke-width="1.100"/>
<path d="M17 305.500l-5 7h3l-3.500 6.500l8 -8.500h-3.200l4 -5z" fill="#f6ee2a" stroke="#b8b000" stroke-width=".6"/><path d="M5.500 312v7.500M20.500 312v7.500M6 316.500h14" stroke="#000" stroke-width="1.100" fill="none"/><path d="M8.800 314.300l-2.600 2.200l2.600 2.200M17.200 314.300l2.600 2.200l-2.600 2.200" fill="none" stroke="#000" stroke-width="1"/>
<path d="M3 325.500h17.500q3 0 3 3v15q0 3 -3 3h-17.500z" fill="url(#gy)" stroke="#e2b34f" stroke-width="1"/><path d="M3.500 329v13M18 329v14.500M4 332.500h13.500" stroke="#000" stroke-width="1.200" fill="none"/><path d="M6.800 330.300l-2.600 2.200l2.600 2.200M14.800 330.300l2.600 2.200l-2.600 2.200" fill="none" stroke="#000" stroke-width="1"/><path d="M21 340.500v3.500h-3.500z" fill="#777"/>
<circle cx="13" cy="358.500" r="6.500" fill="none" stroke="#0a0aff" stroke-width="1.200"/><path d="M8.500 363l9 -9" stroke="#000" stroke-width="1.100"/><path d="M7.800 363.700l1.200 -4.500l3.300 3.300zM18.200 353.300l-1.200 4.500l-3.300 -3.300z" fill="#000"/>
<path d="M8.500 371.500q8 1 7 12" fill="none" stroke="#0a0aff" stroke-width="1.300"/><path d="M3.500 384l9 -8" stroke="#000" stroke-width="1.100"/><path d="M13.500 375l-1.300 3.800l-2.500 -2.600z" fill="#000"/><path d="M21 383v3.500h-3.500z" fill="#888"/>
<path d="M3.500 408.500l5.500 -14M3.500 408.500h16" stroke="#000" stroke-width="1.300" fill="none"/><path d="M9 396.500q8 2 9.500 10" fill="none" stroke="#000" stroke-width="1"/><path d="M8 395.500l3.500 0.300l-1.800 2.600zM19 407.500l-2.800 -2l2.800 -1z" fill="#000"/><path d="M21 405.500v3.500h-3.500z" fill="#888"/>
<g fill="none" stroke="#b4b4b4" stroke-width="1.100"><path d="M5.500 417v12.500M20.500 417v12.500M5.500 421q7.500 -4 15 0M5.500 427q7.500 -4 15 0"/><path d="M5.500 421l3 -0.500M20.500 421l-3 -0.500"/></g>
<path d="M13 438.500h8M13.500 438.500v7M10.500 446.300h7" stroke="#000" stroke-width="1.200" fill="none"/><path d="M13.500 446l-2.300 -3.500h4.600z" fill="#000"/><path d="M5 448h16" stroke="#0a0aff" stroke-width="1.300"/><path d="M5 452.500l2.500 -3.500M8 452.500l2.500 -3.500M11 452.500l2.500 -3.500M14 452.500l2.500 -3.500M17 452.500l2.500 -3.500M20 452.500l1.500 -2.500" stroke="#0a0aff" stroke-width="1"/>
<g fill="none" stroke="#b0b0b0" stroke-width="1"><path d="M50.500 657v5.500h-8"/><path d="M37 662.500l4 -2.300v4.600z" fill="#c8c8c8"/><rect x="40.500" y="661" width="3" height="3"/></g>
<path d="M62.500 652.900h6.800l4.700 4.700v6l-4.700 4.700h-6.800l-4.700 -4.700v-6z" fill="#e8131d"/><text x="58.600" y="663.400" font-family="Liberation Sans, sans-serif" font-weight="bold" font-size="7.200" fill="#fff" textLength="14.600" lengthAdjust="spacingAndGlyphs">STOP</text>
<rect x="77.500" y="650.500" width="21" height="21" rx="3" fill="url(#gy)" stroke="#e2b34f"/><text x="80" y="659.800" font-family="Liberation Mono, monospace" font-weight="bold" font-size="7.200" fill="#000" textLength="15.500" lengthAdjust="spacingAndGlyphs">Auto</text><path d="M95 661v4.500h-10" fill="none" stroke="#000" stroke-width="1.500"/><path d="M81.500 665.500l4.500 -2.500v5z" fill="#000"/><rect x="85" y="664" width="3" height="3" fill="#000"/>
<path d="M102.500 658q2 8 11 10.500" fill="none" stroke="#0a0aff" stroke-width="1.200"/><path d="M104.500 659l5.500 -4.500h6v5h-3.500l-2.500 2.500z" fill="#ddd" stroke="#000" stroke-width="1"/><path d="M106.500 658.500l3 -2.500M108 660l3.500 -3M109.500 661l2 -2" stroke="#000" stroke-width=".7"/><rect x="116" y="654" width="2.300" height="6.500" fill="#000"/>
<g fill="none" stroke="#9a9a9a" stroke-width="1.100"><rect x="37.500" y="676.500" width="12.500" height="12.500"/><path d="M43.700 676.500v4M43.700 689v-4M37.500 682.700h4M50 682.700h-4"/></g>
<g transform="translate(58 675)"><path d="M10.500 5.500l4.500 -4.500" stroke="#0a0a8c" stroke-width="2.400" stroke-linecap="round"/><path d="M6 3.500l6 6l-2.200 2.200l-6 -6z" fill="#f2e26a" stroke="#3b3b9c" stroke-width=".9"/><path d="M7.500 3l5.500 5.500" stroke="#1a1a9c" stroke-width="1.300"/><path d="M3.800 5.700l6 6l-3.300 4.300l-6.500 -6.500z" fill="#f4f4f4" stroke="#8e8e8e" stroke-width=".8"/><path d="M2.300 7.200l6 6M1 8.700l6 6M4.500 7l-3 3M6.500 9l-3.200 3.200M8.500 11l-3.200 3.300" stroke="#9a9a9a" stroke-width=".7"/></g>
<g fill="none" stroke="#a0a0a0" stroke-width="1.100"><path d="M83.500 677l-3 12M95.500 677l-3 12M83.500 680h11.500"/><path d="M84 680l2.500 -1.500M84 680l2.500 1.500M94.500 680l-2.500 -1.500M94.500 680l-2.500 1.500"/></g>
<path d="M103.500 676.500q0 -1 1 -1h9.500q1 0 1 1v9.500q0 1 -1 1h-1l0.500 3.500l-3.500 -3.500h-5.500q-1 0 -1 -1z" fill="#cfe6fa" stroke="#000" stroke-width="1.200"/><text x="105.800" y="685.300" font-family="Liberation Sans, sans-serif" font-weight="bold" font-size="11.500" fill="#00008b">?</text>
<path d="M129.500 687v13.500M144.500 687v13.500M130 690.500h14" stroke="#000" stroke-width="1.100" fill="none"/><path d="M133 688.500l-3 2l3 2M141 688.500l3 2l-3 2" fill="none" stroke="#000" stroke-width="1"/>
<path d="M194.500 700l14 -13.500" stroke="#000" stroke-width="1"/><path d="M194.500 696.500v3.500h3.500M205 686.500h3.500v3.500" fill="none" stroke="#000" stroke-width="1.100"/><path d="M196.500 691.500l5.500 -5.500l2.500 2.300l-5.500 5.500z" fill="none" stroke="#000" stroke-width="1"/>
<path d="M566 662.200l11 10.500" stroke="#1414ff" stroke-width="1.200"/><path d="M566.500 662l6 -4M577.500 672l3.500 -5M571.700 660l8 7.400" stroke="#000" stroke-width="1" fill="none"/><path d="M571.700 660l3.200 0.800l-2 2zM579.700 667.400l-3.200 -0.800l2 -2z" fill="#000"/>
<path d="M589.500 661v10M602.500 661v10M590 665.500h12" stroke="#000" stroke-width="1.300" fill="none"/><path d="M593 663.200l-2.700 2.300l2.700 2.300M599 663.200l2.700 2.300l-2.700 2.300" fill="none" stroke="#000" stroke-width="1.100"/>
<path d="M612 659.700h11M612 672.300h11M617.500 660v12" stroke="#000" stroke-width="1.300" fill="none"/><path d="M615.200 663.200l2.300 -2.700l2.300 2.700M615.200 669l2.300 2.700l2.300 -2.700" fill="none" stroke="#000" stroke-width="1.100"/>
<path d="M756.500 660v12M809.500 660v12M757 666.500h52" stroke="#000" stroke-width="1.200" fill="none"/><path d="M757 666.500l4 -2.200v4.400zM809 666.500l-4 -2.200v4.400z" fill="#000"/><rect x="760.500" y="665" width="3" height="3" fill="#000"/><rect x="802.500" y="665" width="3" height="3" fill="#000"/><rect x="775.500" y="659.500" width="12" height="5.500" fill="#fff" stroke="#000" stroke-width="1"/><path d="M797 658l-7 6.500h3.500l-4.500 6l9 -7.500h-3.500l4.500 -5z" fill="#f6ee2a" stroke="#b8b000" stroke-width=".6"/>
<rect x="2.500" y="120.500" width="27" height="24.500" fill="none" stroke="#ed1c24" stroke-width="5"/>
<rect x="0.500" y="322.500" width="30.500" height="27.500" fill="none" stroke="#ed1c24" stroke-width="5"/>
<defs><radialGradient id="glogo" cx=".4" cy=".35" r=".7"><stop offset="0" stop-color="#4aa3ee"/><stop offset="1" stop-color="#1767c4"/></radialGradient></defs><circle cx="8" cy="10.800" r="7.800" fill="url(#glogo)"/><circle cx="8" cy="10.800" r="5.600" fill="none" stroke="#fff" stroke-width="1.300" opacity=".85"/><path d="M5.300 6.500v8.500M5.800 11l4.500 -4.500M6.500 10.500l6.300 5" stroke="#fff" stroke-width="1.700" fill="none"/><circle cx="8" cy="10.800" r="7.200" fill="none" stroke="#1a6fd0" stroke-width="1.400"/>
</svg>
<span style="position:absolute;left:22px;top:4.84px;font-size:12px;line-height:1;font-weight:normal;color:#000;white-space:pre;letter-spacing:-0.166px;text-shadow:0 0 5px rgba(255,255,255,.95),0 0 9px rgba(255,255,255,.8),0 0 12px rgba(255,255,255,.6);">КОМПАС-3D V15.2  x64 - Фрагмент БЕЗ ИМЕНИ1</span>
<span style="position:absolute;left:16.5px;top:28.69px;font-size:11px;line-height:1;font-weight:normal;color:#1a1a1a;white-space:pre;letter-spacing:-0.391px;"><u>Ф</u>айл</span>
<span style="position:absolute;left:57.5px;top:28.69px;font-size:11px;line-height:1;font-weight:normal;color:#1a1a1a;white-space:pre;letter-spacing:0.143px;"><u>Р</u>едактор</span>
<span style="position:absolute;left:121.7px;top:28.69px;font-size:11px;line-height:1;font-weight:normal;color:#1a1a1a;white-space:pre;letter-spacing:-0.058px;">В<u>ы</u>делить</span>
<span style="position:absolute;left:187.5px;top:28.69px;font-size:11px;line-height:1;font-weight:normal;color:#1a1a1a;white-space:pre;letter-spacing:-0.641px;"><u>В</u>ид</span>
<span style="position:absolute;left:221.7px;top:28.69px;font-size:11px;line-height:1;font-weight:normal;color:#1a1a1a;white-space:pre;letter-spacing:-0.087px;">Вст<u>а</u>вка</span>
<span style="position:absolute;left:277.5px;top:28.69px;font-size:11px;line-height:1;font-weight:normal;color:#1a1a1a;white-space:pre;letter-spacing:-0.099px;"><u>И</u>нструменты</span>
<span style="position:absolute;left:360.7px;top:28.69px;font-size:11px;line-height:1;font-weight:normal;color:#1a1a1a;white-space:pre;letter-spacing:-0.247px;">С<u>п</u>ецификация</span>
<span style="position:absolute;left:450.5px;top:28.69px;font-size:11px;line-height:1;font-weight:normal;color:#1a1a1a;white-space:pre;letter-spacing:-0.248px;">Се<u>р</u>вис</span>
<span style="position:absolute;left:501.7px;top:28.69px;font-size:11px;line-height:1;font-weight:normal;color:#1a1a1a;white-space:pre;letter-spacing:-0.070px;"><u>О</u>кно</span>
<span style="position:absolute;left:542.5px;top:28.69px;font-size:11px;line-height:1;font-weight:normal;color:#1a1a1a;white-space:pre;letter-spacing:-0.096px;"><u>С</u>правка</span>
<span style="position:absolute;left:600.5px;top:28.69px;font-size:11px;line-height:1;font-weight:normal;color:#1a1a1a;white-space:pre;letter-spacing:0.039px;"><u>Б</u>иблиотеки</span>
<span style="position:absolute;left:40px;top:79.69px;font-size:11px;line-height:1;font-weight:normal;color:#000;white-space:pre;">1.0</span>
<span style="position:absolute;left:130px;top:79.69px;font-size:11px;line-height:1;font-weight:normal;color:#000;white-space:pre;letter-spacing:-0.176px;">Системный слой (0)</span>
<span style="position:absolute;left:600px;top:53.69px;font-size:11px;line-height:1;font-weight:normal;color:#000;white-space:pre;">1.0</span>
<span style="position:absolute;left:486px;top:79.69px;font-size:11px;line-height:1;font-weight:normal;color:#000;white-space:pre;width:41px;overflow:hidden;">-12.1708</span>
<span style="position:absolute;left:536px;top:79.69px;font-size:11px;line-height:1;font-weight:normal;color:#000;white-space:pre;width:41px;overflow:hidden;">-39.6875</span>
<span style="position:absolute;left:80px;top:105.69px;font-size:11px;line-height:1;font-weight:bold;color:#000;white-space:pre;letter-spacing:0.120px;">Фрагмент БЕЗ ИМЕНИ1</span>
<span style="position:absolute;left:574.5px;top:444.19px;font-size:11px;line-height:1;font-weight:normal;color:#000;white-space:pre;letter-spacing:-0.268px;">Выравнивание</span>
<span style="position:absolute;left:146.8px;top:688.99px;font-size:11px;line-height:1;font-weight:normal;color:#26264e;white-space:pre;letter-spacing:-0.569px;">Размер</span>
<span style="position:absolute;left:211px;top:688.99px;font-size:11px;line-height:1;font-weight:normal;color:#26264e;white-space:pre;letter-spacing:-0.238px;">Параметры</span>
<span style="position:absolute;left:157.2px;top:660.69px;font-size:11px;line-height:1;font-weight:normal;color:#000;white-space:pre;letter-spacing:-0.336px;">т<u>1</u></span>
<span style="position:absolute;left:288px;top:660.69px;font-size:11px;line-height:1;font-weight:normal;color:#8a8fa0;white-space:pre;letter-spacing:-0.336px;">т<u>2</u></span>
<span style="position:absolute;left:419px;top:660.69px;font-size:11px;line-height:1;font-weight:normal;color:#8a8fa0;white-space:pre;letter-spacing:-0.336px;">т<u>3</u></span>
<span style="position:absolute;left:178px;top:660.69px;font-size:11px;line-height:1;font-weight:normal;color:#000;white-space:pre;width:41px;overflow:hidden;">-12.1708</span>
<span style="position:absolute;left:227px;top:660.69px;font-size:11px;line-height:1;font-weight:normal;color:#000;white-space:pre;width:41px;overflow:hidden;">-38.7351</span>
<span style="position:absolute;left:540px;top:660.69px;font-size:11px;line-height:1;font-weight:normal;color:#000;white-space:pre;letter-spacing:-0.125px;">Т<u>и</u>п</span>
<span style="position:absolute;left:637px;top:660.27px;font-size:11.5px;line-height:1;font-weight:normal;color:#000;white-space:pre;letter-spacing:0.003px;">Т<u>е</u>кст</span>
<span style="position:absolute;left:6.7px;top:714.69px;font-size:11px;line-height:1;font-weight:normal;color:#262626;white-space:pre;letter-spacing:0.131px;">Укажите объект или первую точку привязки размера</span>
</body></html>
